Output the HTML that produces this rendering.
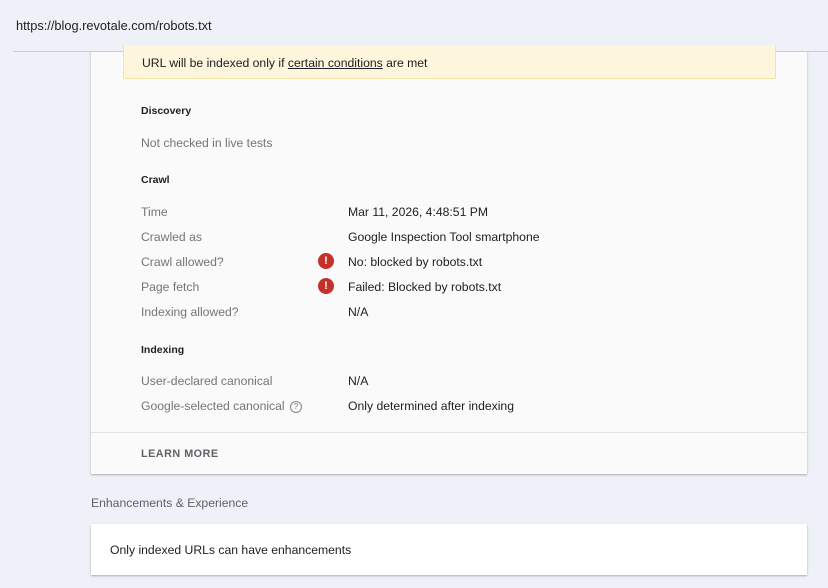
<!DOCTYPE html>
<html><head><style>
body{margin:0;width:828px;height:588px;background:#eef1f7;font-family:"Liberation Sans",Arial,sans-serif;position:relative;overflow:hidden}
.a{position:absolute;white-space:nowrap}
.hdr{position:absolute;top:0;height:51px;background:#eef1f7;border-bottom:1px solid #c8ccd2;left:13px;width:815px}
.hdr2{position:absolute;top:0;left:0;width:13px;height:52px;background:#eef1f7}
.card{position:absolute;left:91px;top:40px;width:716px;height:434px;background:#fafafa;box-shadow:0 1px 2px rgba(0,0,0,.3)}
.yel{position:absolute;left:123px;top:45px;width:651px;height:33px;background:#fdf5dc;border:1px solid #f6e3a8;border-top:none}
.lab{font-size:12.2px;color:#757575}
.val{font-size:12.2px;color:#202124}
.h{font-size:10.5px;color:#202124;font-weight:bold}
.ic{position:absolute;width:16px;height:16px;border-radius:50%;background:#c5302a;color:#fff;font-size:11px;font-weight:bold;text-align:center;line-height:16px}
</style></head><body>
<div class="card"></div>
<div class="hdr2"></div>
<div class="hdr"></div>
<div class="a" style="left:16px;top:18px;font-size:12.8px;color:#202124">https://blog.revotale.com/robots.txt</div>
<div class="yel"></div>
<div class="a val" style="left:142px;top:56px">URL will be indexed only if <span style="text-decoration:underline">certain conditions</span> are met</div>
<div class="a h" style="left:141px;top:105px">Discovery</div>
<div class="a lab" style="left:141px;top:136px">Not checked in live tests</div>
<div class="a h" style="left:141px;top:174px">Crawl</div>
<div class="a lab" style="left:141px;top:205px">Time</div><div class="a val" style="left:348px;top:205px">Mar 11, 2026, 4:48:51 PM</div>
<div class="a lab" style="left:141px;top:230px">Crawled as</div><div class="a val" style="left:348px;top:230px">Google Inspection Tool smartphone</div>
<div class="a lab" style="left:141px;top:255px">Crawl allowed?</div><div class="ic" style="left:318px;top:253px">!</div><div class="a val" style="left:348px;top:255px">No: blocked by robots.txt</div>
<div class="a lab" style="left:141px;top:280px">Page fetch</div><div class="ic" style="left:318px;top:278px">!</div><div class="a val" style="left:348px;top:280px">Failed: Blocked by robots.txt</div>
<div class="a lab" style="left:141px;top:305px">Indexing allowed?</div><div class="a val" style="left:348px;top:305px">N/A</div>
<div class="a h" style="left:141px;top:344px">Indexing</div>
<div class="a lab" style="left:141px;top:374px">User-declared canonical</div><div class="a val" style="left:348px;top:374px">N/A</div>
<div class="a lab" style="left:141px;top:399px">Google-selected canonical <span style="display:inline-block;width:10px;height:10px;border:1px solid #888;border-radius:50%;font-size:8px;text-align:center;line-height:10px;vertical-align:1px;margin-left:2px">?</span></div><div class="a val" style="left:348px;top:399px">Only determined after indexing</div>
<div style="position:absolute;left:91px;top:432px;width:716px;height:1px;background:#e3e3e3"></div>
<div class="a" style="left:141px;top:448px;font-size:10.8px;font-weight:bold;color:#5f6368;letter-spacing:.5px">LEARN MORE</div>
<div class="a" style="left:91px;top:496px;font-size:12.2px;color:#5f6368">Enhancements &amp; Experience</div>
<div style="position:absolute;left:91px;top:524px;width:716px;height:51px;background:#fff;box-shadow:0 1px 2px rgba(0,0,0,.3)"></div>
<div class="a val" style="left:110px;top:543px">Only indexed URLs can have enhancements</div>
</body></html>
